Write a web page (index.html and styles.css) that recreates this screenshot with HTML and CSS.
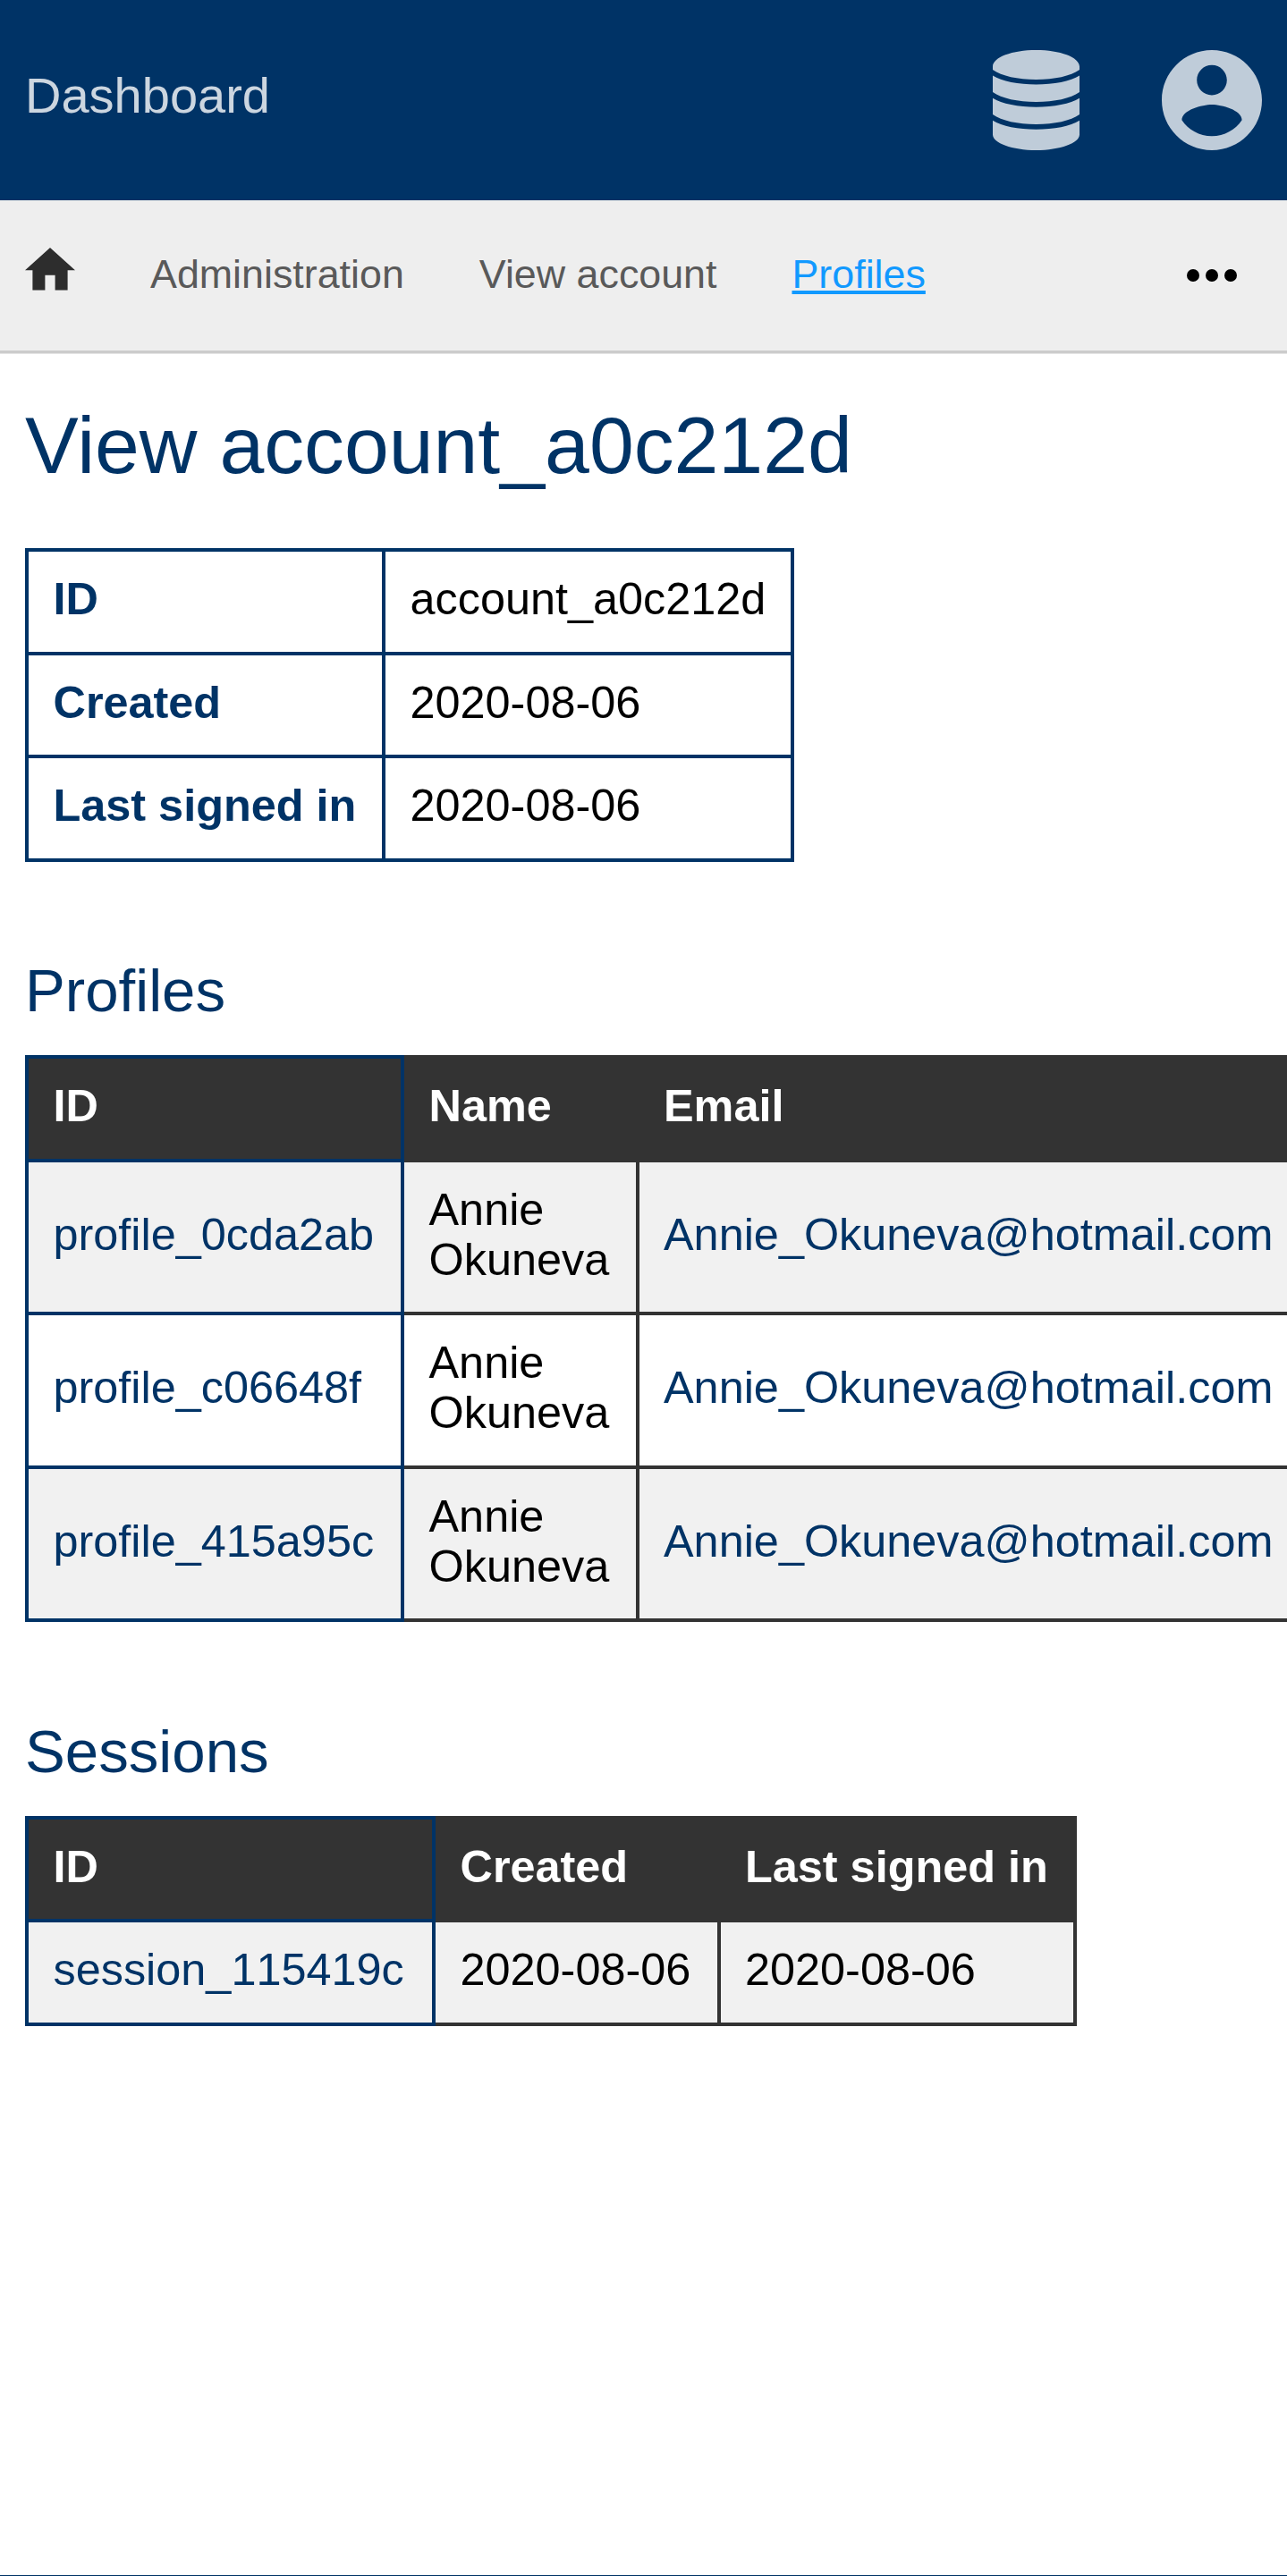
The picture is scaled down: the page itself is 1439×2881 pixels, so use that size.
FILE: index.html
```html
<!DOCTYPE html>
<html lang="en">
<head>
<meta charset="utf-8">
<title>View account</title>
<link rel="stylesheet" href="styles.css">
</head>
<body>
<header class="header">
  <a class="header-title">Dashboard</a>
  <div class="header-menus">
    <svg class="icon-database" viewBox="0 0 97 112"><path d="M0 18.5C0 8 21.7 0 48.5 0S97 8 97 18.5V22C87 29 69 33 48.5 33S10 29 0 22zM0 28.5C10 35 29 38.5 48.5 38.5S87 35 97 28.5V47C87 54 69 58 48.5 58S10 54 0 47zM0 53.8C10 60.2 29 63.7 48.5 63.7S87 60.2 97 53.8V72C87 79 69 83 48.5 83S10 79 0 72zM0 78.8C10 85.3 29 88.8 48.5 88.8S87 85.3 97 78.8V94.5C97 104 75.3 112 48.5 112S0 104 0 94.5z"/></svg>
    <svg class="icon-account" viewBox="2 2 20 20"><path d="M12 2C6.48 2 2 6.48 2 12s4.48 10 10 10 10-4.48 10-10S17.52 2 12 2zm0 3c1.66 0 3 1.34 3 3s-1.34 3-3 3-3-1.34-3-3 1.34-3 3-3zm0 14.2c-2.5 0-4.71-1.28-6-3.22.03-1.99 4-3.08 6-3.08 1.99 0 5.97 1.09 6 3.08-1.29 1.94-3.5 3.22-6 3.22z"/></svg>
  </div>
</header>
<nav class="navbar">
  <a class="nav-home"><svg class="icon-home" viewBox="2 3 20 17"><path d="M10 20v-6h4v6h5v-8h3L12 3 2 12h3v8z"/></svg></a>
  <a class="nav-link">Administration</a>
  <a class="nav-link">View account</a>
  <a class="nav-link nav-current">Profiles</a>
  <svg class="icon-more" viewBox="0 0 24 24"><circle cx="6" cy="12" r="2"/><circle cx="12" cy="12" r="2"/><circle cx="18" cy="12" r="2"/></svg>
</nav>
<main class="content">
  <h1>View account_a0c212d</h1>
  <table class="details">
    <colgroup><col class="details-key"><col class="details-value"></colgroup>
    <tr><th>ID</th><td>account_a0c212d</td></tr>
    <tr><th>Created</th><td>2020-08-06</td></tr>
    <tr><th>Last signed in</th><td>2020-08-06</td></tr>
  </table>
  <h2>Profiles</h2>
  <table class="list profiles">
    <colgroup><col class="profile-id"><col class="profile-name"><col class="profile-email"></colgroup>
    <thead><tr><th class="key">ID</th><th>Name</th><th>Email</th></tr></thead>
    <tbody>
      <tr><td class="key"><a>profile_0cda2ab</a></td><td>Annie Okuneva</td><td><a>Annie_Okuneva@hotmail.com</a></td></tr>
      <tr><td class="key"><a>profile_c06648f</a></td><td>Annie Okuneva</td><td><a>Annie_Okuneva@hotmail.com</a></td></tr>
      <tr><td class="key"><a>profile_415a95c</a></td><td>Annie Okuneva</td><td><a>Annie_Okuneva@hotmail.com</a></td></tr>
    </tbody>
  </table>
  <h2>Sessions</h2>
  <table class="list sessions">
    <colgroup><col class="session-id"><col class="session-created"><col class="session-last"></colgroup>
    <thead><tr><th class="key">ID</th><th>Created</th><th>Last signed in</th></tr></thead>
    <tbody><tr><td class="key"><a>session_115419c</a></td><td>2020-08-06</td><td>2020-08-06</td></tr></tbody>
  </table>
</main>
<footer class="footer"></footer>
</body>
</html>
```
FILE: styles.css
```css
* { box-sizing: border-box; }
body {
  margin: 0;
  height: 2881px;
  overflow: hidden;
  display: flex;
  flex-direction: column;
  background: #fff;
  color: #000;
  font-family: "Liberation Sans", Arial, sans-serif;
}
svg { display: block; }
a { color: #003366; }
.header {
  flex: none;
  height: 224px;
  padding: 0 28px;
  display: flex;
  align-items: center;
  justify-content: space-between;
  background: #003366;
}
.header-title {
  font-size: 56px;
  line-height: 64px;
  padding-bottom: 11px;
  color: #ccd6e0;
}
.header-menus { display: flex; gap: 92px; fill: #bfccd9; }
.icon-database { width: 97px; height: 112px; }
.icon-account { width: 112px; height: 112px; }
.navbar {
  flex: none;
  height: 171px;
  padding: 0 42px 0 28px;
  display: flex;
  align-items: center;
  gap: 84px;
  background: #eee;
  border-bottom: 3px solid #ccc;
  box-shadow: 0 1px 0 #e5e5e5;
}
.nav-home { padding-bottom: 14px; }
.icon-home { width: 56px; height: 47.6px; fill: #2d2d2d; }
.nav-link { font-size: 44.8px; line-height: 52px; padding-bottom: 4px; color: #595959; white-space: nowrap; }
.nav-current {
  color: #1199ff;
  text-decoration: underline;
  text-decoration-thickness: 4px;
  text-underline-offset: 3px;
  text-decoration-skip-ink: none;
}
.icon-more { width: 84px; height: 84px; margin-left: auto; fill: #000; }
.content { flex: 1; padding: 52px 0 0 28px; }
h1, h2 { margin: 0; font-weight: 400; color: #003366; }
h1 { font-size: 89.6px; line-height: 102px; margin-bottom: 64px; }
h2 { font-size: 67.2px; line-height: 76px; margin: 106.5px 0 34px; }
table {
  table-layout: fixed;
  border-collapse: collapse;
  font-size: 50.4px;
  line-height: 56px;
  font-kerning: none;
}
th, td {
  padding: 25px 26px 30px 27.5px;
  border: 4px solid #333;
  text-align: left;
}
tr { height: 115.5px; }
.details { width: 860px; margin-bottom: 106px; }
.details th, .details td { border-color: #003366; }
.details th { color: #003366; }
.details-key { width: 399px; }
.details-value { width: 457px; }
.list thead th { background: #333; color: #fff; }
.list tbody tr:nth-child(odd) { background: #f1f1f1; }
.list .key { border-color: #003366; }
.profiles { width: 1425px; }
.profiles tbody tr { height: 171.5px; }
.profile-id { width: 420px; }
.profile-name { width: 262.5px; }
.profile-email { width: 738.5px; }
.sessions { width: 1176px; }
.session-id { width: 455px; }
.session-created { width: 318.5px; }
.session-last { width: 398.5px; }
.footer { flex: none; height: 1px; background: #003366; }
```
